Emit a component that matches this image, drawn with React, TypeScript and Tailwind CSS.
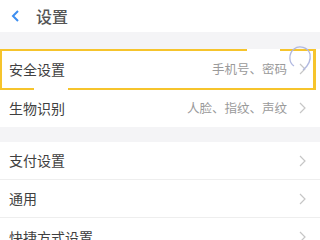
import React from 'react'

type Row = { label: string; hint?: string }

function Chevron() {
  return (
    <svg width="7" height="12" viewBox="0 0 7 12" className="shrink-0" aria-hidden="true">
      <polyline points="1,1 6,6 1,11" fill="none" stroke="#c6c6c6" strokeWidth="1.2" />
    </svg>
  )
}

function SettingRow({ label, hint, h, border }: Row & { h: string; border?: boolean }) {
  return (
    <div className={`flex items-center pl-[9px] pr-[14px] ${h} ${border ? 'border-b border-[#eeeeee]' : ''}`}>
      <span className="text-[14px] text-[#404040]">{label}</span>
      <div className="ml-auto flex items-center gap-[12px]">
        {hint && <span className="text-[12.5px] text-[#9a9a9a]">{hint}</span>}
        <Chevron />
      </div>
    </div>
  )
}

export default function App() {
  return (
    <div
      className="relative h-[240px] w-[320px] overflow-hidden bg-[#f4f4f6]"
      style={{ fontFamily: '"Noto Sans CJK SC", "Noto Sans", sans-serif' }}
    >
      <div className="flex h-[32px] items-center bg-white pl-[11px]">
        <svg width="8" height="12" viewBox="0 0 8 12" aria-hidden="true">
          <polyline points="7,1 2,6 7,11" fill="none" stroke="#3d8ef0" strokeWidth="2" />
        </svg>
        <span className="ml-[17px] text-[16px] font-medium text-[#555555]">设置</span>
      </div>

      <div className="h-[17px]" />

      <div className="bg-white">
        <SettingRow label="安全设置" hint="手机号、密码" h="h-[40px]" />
        <SettingRow label="生物识别" hint="人脸、指纹、声纹" h="h-[38px]" />
      </div>

      <div className="h-[15px]" />

      <div className="bg-white">
        <SettingRow label="支付设置" h="h-[38px]" border />
        <SettingRow label="通用" h="h-[38px]" border />
        <SettingRow label="快捷方式设置" h="h-[38px]" />
      </div>

      {/* yellow highlight annotation */}
      <div className="absolute left-0 top-[49px] h-[41px] w-[2px] bg-[#f6c42c]" />
      <div className="absolute left-0 top-[49px] h-[2px] w-[247px] bg-[#f6c42c]" />
      <div className="absolute left-[280px] top-[49px] h-[2px] w-[36px] bg-[#f6c42c]" />
      <div className="absolute left-[313px] top-[50px] h-[40px] w-[3px] bg-[#f6c42c]" />
      <div className="absolute left-0 top-[88px] h-[2px] w-[34px] bg-[#f6c42c]" />
      <div className="absolute left-[68px] top-[88px] h-[2px] w-[248px] bg-[#f6c42c]" />

      {/* circle annotation */}
      <svg className="absolute left-[286px] top-[44px]" width="30" height="30" viewBox="0 0 30 30" aria-hidden="true">
        <path d="M8 22 C 3 19, 2 10, 8 5 C 13 1, 22 3, 24 10 C 25 16, 22 22, 17 26" fill="none" stroke="#b0b8e0" strokeWidth="1.3" />
      </svg>
    </div>
  )
}
